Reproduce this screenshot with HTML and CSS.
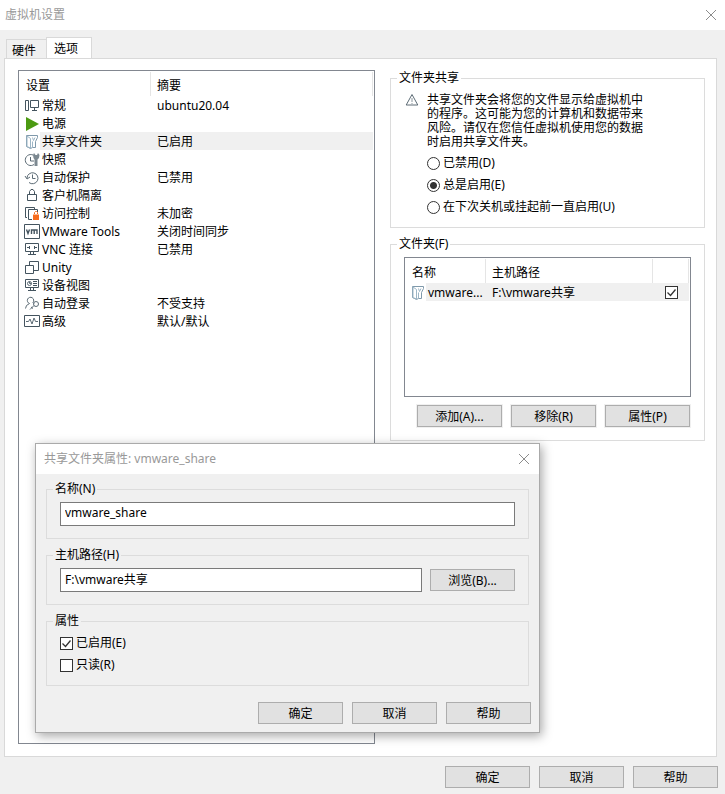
FILE: index.html
```
<!DOCTYPE html>
<html lang="zh-CN">
<head>
  <meta charset="utf-8">
  <title>虚拟机设置</title>
  <link rel="stylesheet" href="styles.css">
</head>
<body>
  <div class="window">
    <header class="titlebar">
      <h1>虚拟机设置</h1>
      <button type="button" class="close" aria-label="关闭">
        <svg width="12" height="12" viewBox="0 0 12 12"><path d="M1 1l10 10M11 1L1 11"/></svg>
      </button>
    </header>

    <div class="tabs" role="tablist">
      <button type="button" class="tab" role="tab" aria-selected="false">硬件</button>
      <button type="button" class="tab active" role="tab" aria-selected="true">选项</button>
    </div>

    <main class="panel">
      <div class="listbox">
        <table class="list settings">
          <colgroup><col class="col-icon"><col class="col-setting"><col></colgroup>
          <thead>
            <tr><th colspan="2">设置</th><th>摘要</th></tr>
          </thead>
          <tbody>
            <tr>
              <td><svg class="icon" viewBox="0 0 16 16"><path d="M1.500 2.500h3v10h-3zM6.500 2.500h8v7h-8zM10.500 10v2M8 12.500h5"/></svg></td>
              <td>常规</td><td>ubuntu20.04</td>
            </tr>
            <tr>
              <td><svg class="icon" viewBox="0 0 16 16"><path class="play" d="M2 1v14l13-7z"/></svg></td>
              <td>电源</td><td></td>
            </tr>
            <tr class="selected">
              <td><svg class="icon" viewBox="0 0 16 16"><path class="folder" d="M2.500 1.500h11v2l-2 4v6h-3M2.500 1.500v11l4 2 2-1"/><path class="flap" d="M3 2l3.500 2.500v9.500L3 12.500zM8.500 3.500l1 3 1.500-3M8.500 13.500v-6"/></svg></td>
              <td>共享文件夹</td><td>已启用</td>
            </tr>
            <tr>
              <td><svg class="icon" viewBox="0 0 16 16"><path class="soft" d="M9 3A5.500 5.500 0 1 0 10 12.500M6.500 5v4H10"/><path class="wrench" d="M10 1l1.500 2h1.500l1-2 1.500 2-.5 3-1.500 1.500V14h-3V7.500L9.500 6 9 3z"/></svg></td>
              <td>快照</td><td></td>
            </tr>
            <tr>
              <td><svg class="icon" viewBox="0 0 16 16"><path class="soft" d="M3 8a5.500 5.500 0 1 1 2 4.500M1 6l2 3 3-2M8.500 4.500v4h3"/></svg></td>
              <td>自动保护</td><td>已禁用</td>
            </tr>
            <tr>
              <td><svg class="icon" viewBox="0 0 16 16"><path d="M3.500 6.500h9v6h-9zM5.500 6V3.500l1.500-2h2l1.500 2V6"/></svg></td>
              <td>客户机隔离</td><td></td>
            </tr>
            <tr>
              <td><svg class="icon" viewBox="0 0 16 16"><path d="M3 11.500H1.500v-10h9V3M8 13.500H4.500v-10h9V6"/><path class="lock" d="M9 8.500h6V14H9z"/><path class="lock-bow" d="M10.500 8V6.500l1-1h1l1 1V8"/></svg></td>
              <td>访问控制</td><td>未加密</td>
            </tr>
            <tr>
              <td><svg class="icon" viewBox="0 0 16 16"><path d="M.5 .5h15v14H.5z"/><path class="bold" d="M2.500 5.500l1.500 4 1.500-4M7.500 10V6h5.500v4M10.200 6v4"/></svg></td>
              <td>VMware Tools</td><td>关闭时间同步</td>
            </tr>
            <tr>
              <td><svg class="icon" viewBox="0 0 16 16"><path d="M1.500 1.500h13v8h-13zM3 5.500h3M10 5.500h3M5.500 4v3M10.500 4v3M6.500 10v2M9.500 10v2M4 12.500h8"/></svg></td>
              <td>VNC 连接</td><td>已禁用</td>
            </tr>
            <tr>
              <td><svg class="icon" viewBox="0 0 16 16"><path d="M1.500 5.500h8v8h-8zM5.500 5V1.500h9v9H10"/></svg></td>
              <td>Unity</td><td></td>
            </tr>
            <tr>
              <td><svg class="icon" viewBox="0 0 16 16"><path d="M1.500 1.500h13v8h-13zM9 3.500h4M9 5.500h4M9 7.500h4M6.500 10v2M9.500 10v2M4 12.500h8"/><circle class="soft" cx="5.500" cy="5.500" r="2"/><path class="soft" d="M5.500 3.500v2h2"/></svg></td>
              <td>设备视图</td><td></td>
            </tr>
            <tr>
              <td><svg class="icon" viewBox="0 0 16 16"><path class="soft" d="M1.500 12.500l1-3 3-2A3.200 3.200 0 1 1 9 6.500l1 1"/><circle class="soft" cx="12" cy="8" r="2.500"/><path class="soft" d="M10 9.500l-4 4M7 11l2 1.500"/></svg></td>
              <td>自动登录</td><td>不受支持</td>
            </tr>
            <tr>
              <td><svg class="icon" viewBox="0 0 16 16"><path d="M.5 1.500h15v11H.5z"/><path class="soft" d="M2 7.500h2.500L6 5l2 5 2-6 1.500 3.500H14"/></svg></td>
              <td>高级</td><td>默认/默认</td>
            </tr>
          </tbody>
        </table>
      </div>

      <div class="options">
        <fieldset class="group">
          <legend>文件夹共享</legend>
          <div class="sharing">
            <svg class="warning" width="14" height="14" viewBox="0 0 14 14"><path d="M7 1.500l5.800 10.500H1.200z"/><path class="mark" d="M7 5v4M7 10v1"/></svg>
            <div>
              <p class="notice">共享文件夹会将您的文件显示给虚拟机中的程序。这可能为您的计算机和数据带来风险。请仅在您信任虚拟机使用您的数据时启用共享文件夹。</p>
              <label class="choice"><input type="radio" name="sharing">已禁用(D)</label>
              <label class="choice"><input type="radio" name="sharing" checked>总是启用(E)</label>
              <label class="choice"><input type="radio" name="sharing">在下次关机或挂起前一直启用(U)</label>
            </div>
          </div>
        </fieldset>

        <fieldset class="group">
          <legend>文件夹(F)</legend>
          <div class="listbox folders-box">
            <table class="list">
              <colgroup><col class="col-icon"><col class="col-name"><col><col class="col-check"></colgroup>
              <thead>
                <tr><th colspan="2">名称</th><th>主机路径</th><th></th></tr>
              </thead>
              <tbody>
                <tr class="selected">
                  <td><svg class="icon" viewBox="0 0 16 16"><path class="folder" d="M2.500 1.500h11v2l-2 4v6h-3M2.500 1.500v11l4 2 2-1"/><path class="flap" d="M3 2l3.500 2.500v9.500L3 12.500zM8.500 3.500l1 3 1.500-3M8.500 13.500v-6"/></svg></td>
                  <td>vmware...</td>
                  <td>F:\vmware共享</td>
                  <td class="check-cell"><input type="checkbox" aria-label="启用 vmware_share" checked></td>
                </tr>
              </tbody>
            </table>
          </div>
          <div class="buttons folder-buttons">
            <button type="button" class="btn">添加(A)...</button>
            <button type="button" class="btn">移除(R)</button>
            <button type="button" class="btn">属性(P)</button>
          </div>
        </fieldset>
      </div>
    </main>

    <footer class="buttons footer">
      <button type="button" class="btn">确定</button>
      <button type="button" class="btn">取消</button>
      <button type="button" class="btn">帮助</button>
    </footer>
  </div>

  <div class="dialog" role="dialog" aria-labelledby="dialog-title">
    <header class="titlebar">
      <h2 id="dialog-title">共享文件夹属性: vmware_share</h2>
      <button type="button" class="close" aria-label="关闭">
        <svg width="12" height="12" viewBox="0 0 12 12"><path d="M1 1l10 10M11 1L1 11"/></svg>
      </button>
    </header>
    <form class="dialog-body">
      <fieldset class="group">
        <legend><label for="share-name">名称(N)</label></legend>
        <div class="field">
          <input type="text" id="share-name" value="vmware_share">
        </div>
      </fieldset>
      <fieldset class="group">
        <legend><label for="host-path">主机路径(H)</label></legend>
        <div class="field">
          <input type="text" id="host-path" value="F:\vmware共享">
          <button type="button" class="btn">浏览(B)...</button>
        </div>
      </fieldset>
      <fieldset class="group attributes">
        <legend>属性</legend>
        <label class="choice"><input type="checkbox" checked>已启用(E)</label>
        <label class="choice"><input type="checkbox">只读(R)</label>
      </fieldset>
      <div class="buttons dialog-buttons">
        <button type="button" class="btn">确定</button>
        <button type="button" class="btn">取消</button>
        <button type="button" class="btn">帮助</button>
      </div>
    </form>
  </div>
</body>
</html>
```
FILE: styles.css
```
* {
  box-sizing: border-box;
}

body {
  margin: 0;
  background-color: #f0f0f0;
  color: #000;
}

body, button, input {
  font-family: "Noto Sans", "Noto Sans CJK SC", sans-serif;
  font-size: 12px;
  line-height: 16px;
}

.window {
  display: flex;
  flex-direction: column;
  min-height: 100vh;
}

/* Title bars */
.titlebar {
  display: flex;
  align-items: center;
  justify-content: space-between;
  height: 30px;
  padding: 0 8px 0 5px;
  background-color: #fff;
}

.titlebar h1,
.titlebar h2 {
  margin: 0;
  font-size: 12px;
  font-weight: normal;
  color: #999;
}

.close {
  display: flex;
  padding: 0;
  border: none;
  background: none;
}

.close svg {
  fill: none;
  stroke: #8c8c8c;
}

/* Tabs */
.tabs {
  display: flex;
  align-items: flex-end;
  height: 28px;
  padding-left: 6px;
}

.tab {
  height: 19px;
  padding: 3px 10px 0 5px;
  border: 1px solid #d9d9d9;
  border-width: 1px 0 0 1px;
  background-color: #f0f0f0;
}

.tab.active {
  height: 22px;
  margin-bottom: -1px;
  padding: 0 13px 0 7px;
  border-width: 1px 1px 0;
  background-color: #fff;
}

.panel {
  flex: 1;
  display: grid;
  grid-template-columns: 17fr 15fr;
  gap: 15px;
  margin: 0 8px 0 4px;
  padding: 11px 11px 12px 13px;
  border: 1px solid #d9d9d9;
  background-color: #fff;
}

/* Lists */
.listbox {
  padding: 1px;
  border: 1px solid #828790;
  background-color: #fff;
}

.list {
  width: 100%;
  table-layout: fixed;
  border-spacing: 0;
}

.list th,
.list td {
  padding: 0;
  text-align: left;
  font-weight: normal;
  white-space: nowrap;
}

.list th {
  height: 24px;
  padding: 4px 0 0 6px;
  border-right: 1px solid #e5e5e5;
}

.list td {
  height: 18px;
  padding: 2px 0 0 2px;
}

.list td:first-child {
  padding: 1px 0 0 4px;
}

.list td:nth-child(3) {
  padding-left: 6px;
}

.list .selected td:not(:first-child) {
  background-color: #f0f0f0;
}

.list .check-cell {
  padding: 0 0 0 12px;
}

.list .check-cell input {
  display: block;
}

.col-icon {
  width: 20px;
}

.col-setting {
  width: 111px;
}

.col-name {
  width: 60px;
}

.col-check {
  width: 36px;
}

.folders-box {
  height: 140px;
}

/* Icons */
.icon {
  display: block;
  width: 16px;
  height: 16px;
  fill: none;
  stroke: #44545f;
}

.icon .soft {
  stroke: #5c6b75;
}

.icon .bold {
  stroke-width: 1.4;
}

.icon .play {
  fill: #4c9a12;
  stroke: none;
}

.icon .folder {
  stroke: #7f99ab;
}

.icon .flap {
  fill: #fff;
  stroke: #9db6c6;
}

.icon .wrench {
  fill: #7d8991;
  stroke: none;
}

.icon .lock {
  fill: #f76b1c;
  stroke: none;
}

.icon .lock-bow {
  stroke: #f76b1c;
}

/* Group boxes */
.group {
  min-width: 0;
  margin: 0 0 8px;
  padding: 5px 13px 12px;
  border: 1px solid #dcdcdc;
}

.group legend {
  margin-left: -7px;
  padding: 0 2px;
}

.sharing {
  display: flex;
  gap: 8px;
  padding: 2px 0 0 1px;
  margin-bottom: -3px;
}

.warning {
  flex: none;
  fill: none;
  stroke: #5c6b75;
}

.warning .mark {
  stroke: #8c979e;
}

.notice {
  max-width: 220px;
  margin: 0 0 3px;
  line-height: 14px;
}

.choice {
  display: flex;
  align-items: center;
  gap: 3px;
  height: 22px;
}

/* Controls */
input[type="radio"],
input[type="checkbox"] {
  appearance: none;
  flex: none;
  width: 13px;
  height: 13px;
  margin: 0;
  border: 1px solid #333;
  background: #fff center no-repeat;
}

input[type="radio"] {
  border-radius: 50%;
}

input[type="radio"]:checked {
  background-image: radial-gradient(circle, #333 3px, transparent 4px);
}

input[type="checkbox"]:checked {
  background-image: url("data:image/svg+xml,%3Csvg xmlns='http://www.w3.org/2000/svg' width='11' height='11'%3E%3Cpath d='M1.500 5.500l3 3 5-6' fill='none' stroke='%23333' stroke-width='1.300'/%3E%3C/svg%3E");
}

input[type="text"] {
  flex: 1;
  min-width: 0;
  height: 24px;
  padding: 0 4px 3px;
  border: 1px solid #7a7a7a;
  border-radius: 0;
  background-color: #fff;
  color: #000;
}

.btn {
  width: 85px;
  height: 22px;
  padding: 2px 0 0;
  border: 1px solid #adadad;
  background-color: #e1e1e1;
  color: #000;
}

.buttons {
  display: flex;
  justify-content: flex-end;
  gap: 9px;
}

.folder-buttons {
  margin: 8px 1px 1px 0;
}

.folder-buttons .btn {
  box-shadow: 0 0 0 1px #f0f0f0;
}

.footer {
  padding: 9px 7px 6px;
}

/* Shared folder dialog, floats over the settings window */
.dialog {
  position: absolute;
  top: 443px;
  left: 35px;
  width: 505px;
  border: 1px solid #aaa;
  background-color: #f0f0f0;
  box-shadow: 2px 3px 10px rgba(0, 0, 0, 0.35);
}

.dialog .titlebar {
  padding: 0 9px 0 8px;
}

.dialog-body {
  padding: 7px 10px 8px;
}

.field {
  display: flex;
  align-items: center;
  gap: 8px;
}

.attributes {
  padding: 3px 13px 9px;
}

.dialog-buttons {
  margin: 16px -2px 0 0;
}
```
